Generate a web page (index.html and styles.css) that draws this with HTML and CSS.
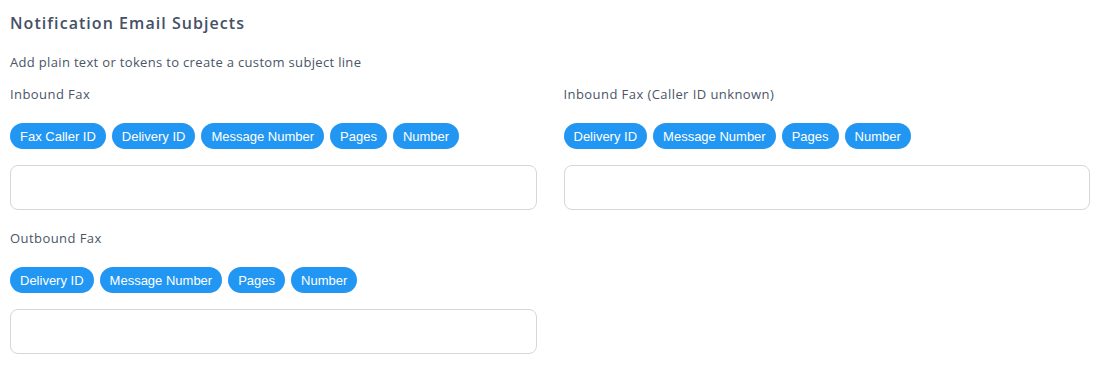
FILE: index.html
```html
<!DOCTYPE html>
<html>
<head>
<meta charset="utf-8">
<link rel="stylesheet" href="styles.css">
</head>
<body>
<div class="page">
  <h2 class="title">Notification Email Subjects</h2>
  <p class="desc">Add plain text or tokens to create a custom subject line</p>
  <div class="grid">
    <div class="section">
      <div class="label">Inbound Fax</div>
      <div class="chips">
        <span class="chip">Fax Caller ID</span>
        <span class="chip">Delivery ID</span>
        <span class="chip">Message Number</span>
        <span class="chip">Pages</span>
        <span class="chip">Number</span>
      </div>
      <div class="input"></div>
    </div>
    <div class="section">
      <div class="label">Inbound Fax (Caller ID unknown)</div>
      <div class="chips">
        <span class="chip">Delivery ID</span>
        <span class="chip">Message Number</span>
        <span class="chip">Pages</span>
        <span class="chip">Number</span>
      </div>
      <div class="input"></div>
    </div>
    <div class="section">
      <div class="label">Outbound Fax</div>
      <div class="chips">
        <span class="chip">Delivery ID</span>
        <span class="chip">Message Number</span>
        <span class="chip">Pages</span>
        <span class="chip">Number</span>
      </div>
      <div class="input"></div>
    </div>
  </div>
</div>
</body>
</html>
```
FILE: styles.css
```css
html, body {
  margin: 0;
  padding: 0;
  background: #ffffff;
}
.page {
  padding: 12px 12px 0 10px;
  font-family: "Open Sans", "Noto Sans", sans-serif;
  color: #4a5568;
}
.title {
  margin: 0;
  font-size: 16px;
  line-height: 22px;
  font-weight: 600;
  color: #445066;
  letter-spacing: 1.05px;
}
.desc {
  margin: 18px 0 12px;
  font-size: 13px;
  line-height: 20px;
  color: #4a5568;
  letter-spacing: 0.33px;
}
.grid {
  display: grid;
  grid-template-columns: 1fr 1fr;
  column-gap: 27px;
  row-gap: 18px;
}
.section {
  display: flex;
  flex-direction: column;
}
.label {
  font-size: 13px;
  line-height: 20px;
  font-weight: 500;
  color: #4a5568;
  letter-spacing: 0.43px;
}
.chips {
  display: flex;
  gap: 6px;
  margin-top: 19px;
}
.chip {
  display: inline-flex;
  align-items: center;
  height: 26px;
  padding: 0 10px;
  border-radius: 13px;
  background: #2196f3;
  color: #ffffff;
  font-family: "Liberation Sans", Arial, sans-serif;
  font-size: 13px;
}
.input {
  margin-top: 16px;
  height: 43px;
  border: 1px solid #d6d6d6;
  border-radius: 8px;
  background: #fff;
}
```
